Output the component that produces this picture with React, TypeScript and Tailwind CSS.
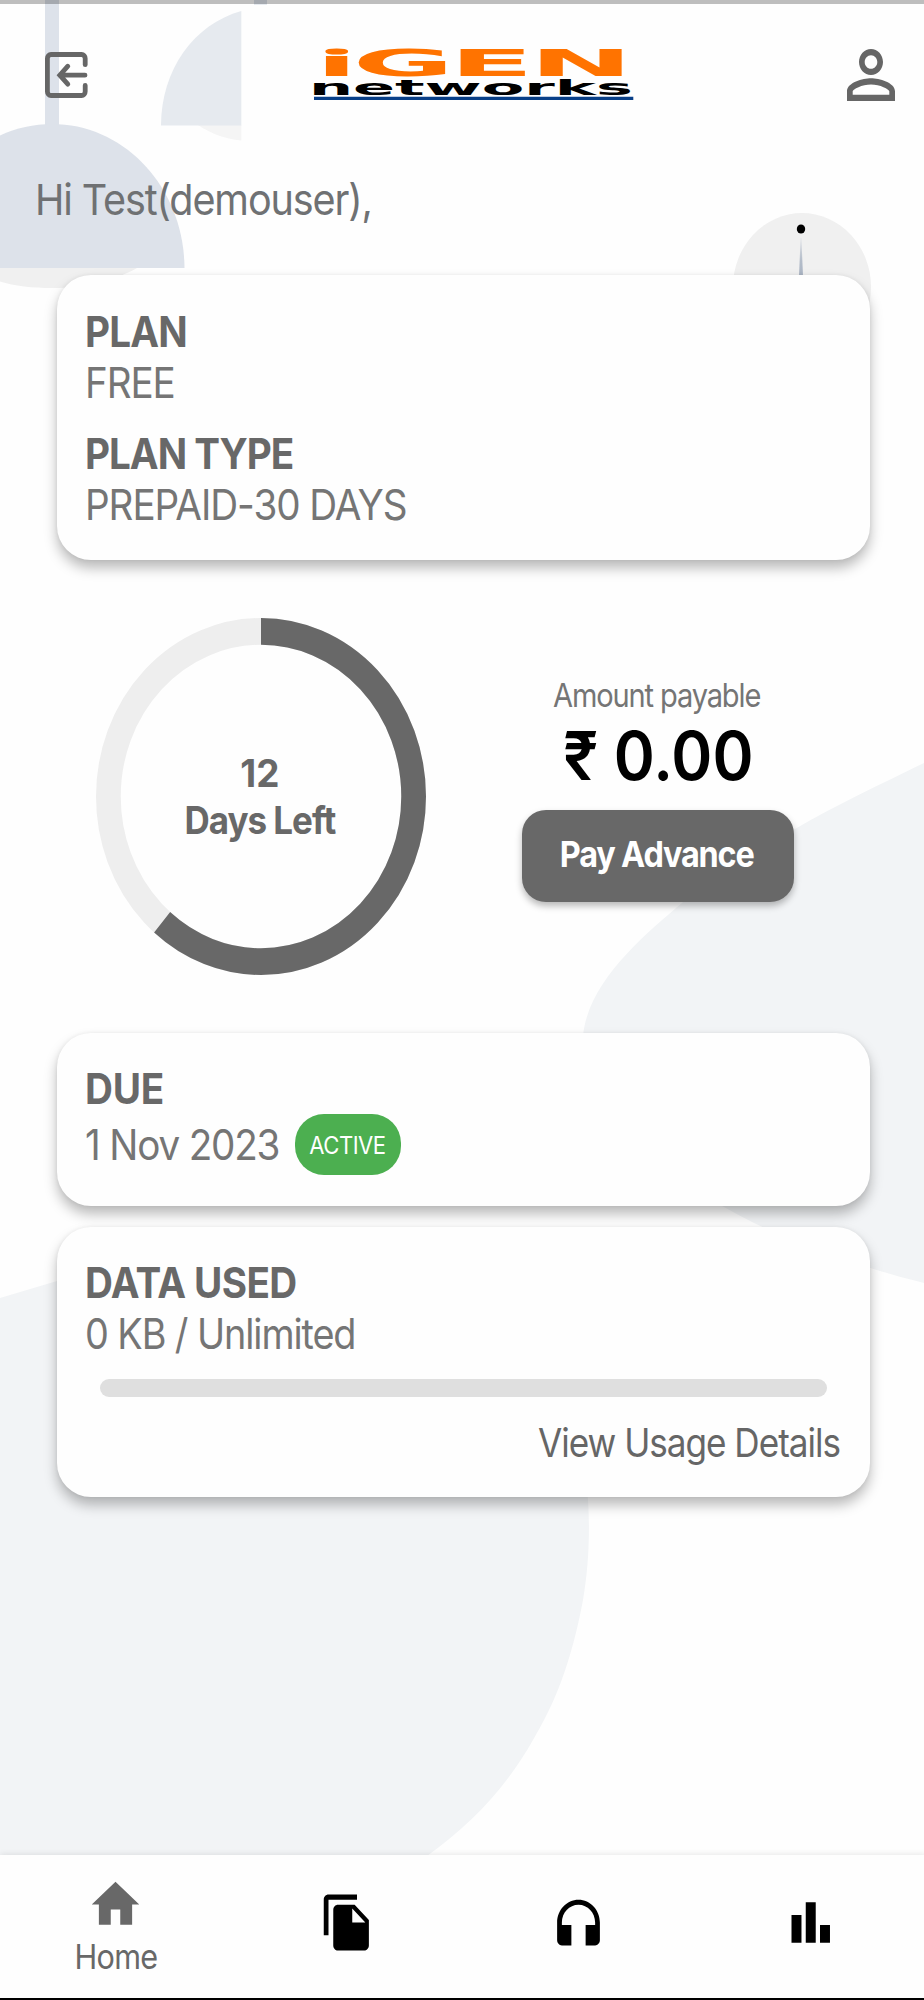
import clsx from "clsx";
import { ReactNode } from "react";

interface TextProps {
  children: ReactNode;
  className?: string;
}

// The app font is slightly condensed, so every label is squeezed a little
const Text = ({ children, className }: TextProps) => (
  <span className={clsx("block whitespace-nowrap", className)}>{children}</span>
);

const Card = ({ children, className }: TextProps) => (
  <section
    className={clsx(
      "mx-[57px] w-[813px] rounded-[34px] bg-[#fefefe] pl-7 pr-[30px] shadow-[0_8px_13px_rgba(0,0,0,0.27),0_0_4px_rgba(0,0,0,0.06)]",
      className
    )}
  >
    {children}
  </section>
);

const NavIcon = ({ path, className }: { path: string; className: string }) => (
  <svg
    viewBox="0 0 24 24"
    preserveAspectRatio="none"
    fill="currentColor"
    className={clsx("h-[61px] w-[57px]", className)}
  >
    <path d={path} />
  </svg>
);

const Backdrop = () => (
  <svg
    viewBox="0 0 924 2000"
    className="absolute inset-0 -z-10 h-[2000px] w-[924px]"
  >
    <defs>
      <linearGradient id="needle" x1="0" y1="0" x2="0" y2="1">
        <stop offset="0" stopColor="#e3e5e9" />
        <stop offset="0.6" stopColor="#b3bcc9" />
        <stop offset="1" stopColor="#aab4c3" />
      </linearGradient>
    </defs>
    <path fill="#dde2ea" d="M45 0h14v125H45z" />
    <path fill="#f0f0f0" d="M0 268h137C116 280 85 288 52 288 33 288 14 286 0 281.5z" />
    <path
      fill="#dde2ea"
      d="M0 135.5C16 128 34 124 52 124c73 0 132 64 132.500 144H0z"
    />
    <path fill="#f5f5f5" d="M198 125h43.300v15.500C224 139 210 133 198 125z" />
    <path fill="#e6eaef" d="M161 125.500C161 70 194 24 241.300 11v114.500z" />
    <path fill="#dde2ea" d="M254 0h13v4.700h-13z" />
    <ellipse cx="802" cy="287" rx="69" ry="74" fill="#f0f0f0" />
    <ellipse cx="801" cy="229" rx="4.200" ry="4.600" fill="#000" />
    <path fill="url(#needle)" d="M800.600 238h.8L803 276h-4z" />
    <path
      fill="#f2f4f6"
      d="M924 763C881 784 838 804 795 829 752 854 717 873 682 903 643 936 588 982 583 1036 583 1110 650 1170 724 1207 775 1236 840 1262 924 1283z"
    />
    <path
      fill="#f2f4f6"
      d="M0 1298 57 1281C200 1240 400 1230 500 1320 560 1376 586 1440 588 1500 590 1530 589 1565 583 1600 571 1664 554 1705 533 1740 507 1786 472 1824 427 1856H0z"
    />
  </svg>
);

const Logo = () => (
  <svg viewBox="0 0 326 60" className="h-[60px] w-[326px] overflow-visible">
    <text
      transform="translate(6.500 34) scale(3.100 1)"
      fontFamily="Open Sans"
      fontWeight="800"
      fontSize="36"
      fill="#ff7300"
    >
      i
    </text>
    <text
      transform="translate(40.500 34) scale(3.350 1)"
      fontFamily="DejaVu Sans"
      fontWeight="700"
      fontSize="37"
      textLength="83.700"
      fill="#ff7300"
    >
      GEN
    </text>
    <text
      transform="translate(-3 52.500) scale(2.950 1)"
      fontFamily="DejaVu Sans"
      fontWeight="700"
      fontSize="21"
      textLength="109.800"
      fill="#000"
    >
      networks
    </text>
    <path fill="#083f88" d="M2 54.800h319.300v3.200H2z" />
  </svg>
);

const Header = () => (
  <header className="flex h-[151px] items-start justify-between pl-[44px] pr-[17px]">
    <svg
      viewBox="0 0 44 48"
      className="mt-[51px] h-12 w-11"
      fill="none"
      stroke="#666"
      strokeWidth="4.800"
      strokeLinecap="round"
      strokeLinejoin="round"
    >
      <path d="M41.200 13.700V7.500a3.600 4 0 0 0-3.600-4H7a3.600 4 0 0 0-3.600 4v33a3.600 4 0 0 0 3.600 4h30.600a3.600 4 0 0 0 3.600-4V34.500" />
      <path d="M41 24.200H16M23.800 15.200 15.800 24.200l8 9" strokeLinejoin="miter" />
    </svg>
    <div className="mt-[42px] pl-[27px]">
      <Logo />
    </div>
    <svg
      viewBox="0 0 24 24"
      preserveAspectRatio="none"
      fill="#666"
      className="mt-[36px] h-[78px] w-[72px]"
    >
      <path d="M12 5.900c1.160 0 2.100.94 2.100 2.100s-.94 2.100-2.100 2.100S9.900 9.160 9.900 8s.94-2.100 2.100-2.100m0 9c2.970 0 6.100 1.460 6.100 2.100v1.100H5.900V17c0-.64 3.130-2.100 6.100-2.100M12 4C9.790 4 8 5.790 8 8s1.790 4 4 4 4-1.790 4-4-1.790-4-4-4zm0 9c-2.670 0-8 1.340-8 4v3h16v-3c0-2.660-5.330-4-8-4z" />
    </svg>
  </header>
);

const DAYS_IN_CYCLE = 31;
const DAYS_LEFT = 12;

const DaysLeft = () => {
  const used = (DAYS_IN_CYCLE - DAYS_LEFT) / DAYS_IN_CYCLE;
  return (
    <div className="relative flex h-[357px] w-[330px] flex-col items-center justify-center">
      <svg
        viewBox="0 0 100 100"
        preserveAspectRatio="none"
        fill="none"
        strokeWidth="7.500"
        className="absolute inset-0 h-full w-full"
      >
        <circle cx="50" cy="50" r="46.250" stroke="#eee" />
        <circle
          cx="50"
          cy="50"
          r="46.250"
          stroke="#686868"
          pathLength="1"
          strokeDasharray={`${used} 1`}
          transform="rotate(-90 50 50)"
        />
      </svg>
      <div className="relative pr-[3px] text-center text-[38px] leading-[47px] font-bold text-[#686868]">
        <Text className="scale-x-[0.97]">{DAYS_LEFT}</Text>
        <Text className="scale-x-[0.92] tracking-[-1.1px]">Days Left</Text>
      </div>
    </div>
  );
};

const navItems = [
  {
    name: "Documents",
    path: "M16 1H4c-1.100 0-2 .9-2 2v14h2V3h12V1zm-1 4l6 6v10c0 1.100-.9 2-2 2H7.990C6.890 23 6 22.100 6 21l.01-14c0-1.100.89-2 1.990-2h7zm-1 7h5.500L14 6.500V12z",
  },
  {
    name: "Support",
    path: "M12 3c-4.970 0-9 4.030-9 9v7c0 1.100.9 2 2 2h4v-8H5v-1c0-3.870 3.130-7 7-7s7 3.130 7 7v1h-4v8h4c1.100 0 2-.9 2-2v-7c0-4.970-4.030-9-9-9z",
  },
  {
    name: "Usage",
    path: "M4 9h4.200v11H4zM16 13h4.200v7H16zM10 4h4.200v16H10z",
  },
];

const BottomNav = () => (
  <nav className="grid h-[145px] w-[926px] grid-cols-4 justify-items-center border-b-2 border-black bg-[#fefefe] text-black shadow-[0_-1px_6px_rgba(0,0,0,0.09)]">
    <a className="flex flex-col items-center text-[#686868]">
      <NavIcon className="mt-[19px]" path="M10 20v-6h4v6h5v-8h3L12 3 2 12h3v8z" />
      <Text className="scale-x-[0.9] text-[34px] leading-[43px] tracking-[-0.8px]">
        Home
      </Text>
    </a>
    {navItems.map((item) => (
      <a key={item.name} aria-label={item.name}>
        <NavIcon className="mt-[37px]" path={item.path} />
      </a>
    ))}
  </nav>
);

export default function App() {
  return (
    <div className="relative isolate flex h-[2000px] w-[924px] flex-col overflow-hidden bg-[#fefefe] font-['Inter','Liberation_Sans',sans-serif]">
      <Backdrop />
      <div className="absolute inset-x-0 top-0 h-1 bg-black/25" />
      <Header />

      <main className="flex-1">
        <Text className="h-[124px] origin-left scale-x-[0.92] pl-[38px] text-[43px] leading-[97px] tracking-[-1.23px] text-[#6f7173]">
          Hi Test(demouser),
        </Text>

        <Card className="h-[285px] pt-[31px] text-[42px] leading-[51px] text-[#757575]">
          <Text className="origin-left scale-x-[0.92] font-bold tracking-[-0.9px] text-[#686868]">
            PLAN
          </Text>
          <Text className="origin-left scale-x-[0.92] tracking-[-1.25px]">
            FREE
          </Text>
          <Text className="mt-5 origin-left scale-x-[0.92] font-bold tracking-[-1.1px] text-[#686868]">
            PLAN TYPE
          </Text>
          <Text className="origin-left scale-x-[0.92] tracking-[-1.15px]">
            PREPAID-30 DAYS
          </Text>
        </Card>

        <div className="flex h-[473px] items-center pl-24">
          <DaysLeft />
          <div className="-mt-4 ml-24 flex w-[272px] flex-col items-center">
            <Text className="mr-0.5 scale-x-[0.88] text-[33px] leading-[40px] tracking-[-1.3px] text-[#757575]">
              Amount payable
            </Text>
            <Text className="scale-x-[0.93] text-[67px] leading-[82px] font-semibold text-black">
              ₹ 0.00
            </Text>
            <button className="mt-[13px] flex h-[92px] w-[272px] justify-center rounded-[24px] bg-[#686868] text-[36px] leading-[89px] font-bold text-white shadow-[0_4px_7px_rgba(0,0,0,0.28)]">
              <Text className="mr-[3px] scale-x-[0.9] tracking-[-1.3px]">
                Pay Advance
              </Text>
            </button>
          </div>
        </div>

        <Card className="h-[173px] pt-[30px] text-[42px] leading-[51px] text-[#757575]">
          <Text className="origin-left scale-x-[0.92] font-bold tracking-[-0.25px] text-[#686868]">
            DUE
          </Text>
          <div className="flex items-center">
            <Text className="w-[210px] origin-left scale-x-[0.92] tracking-[-1.28px]">
              1 Nov 2023
            </Text>
            <span className="flex h-[61px] w-[106px] items-center justify-center rounded-[29px] bg-[#4caf50] pt-[3px] pr-0.5 text-2xl text-white">
              <Text className="scale-x-[0.92] tracking-[-0.55px]">ACTIVE</Text>
            </span>
          </div>
        </Card>

        <Card className="mt-[21px] h-[270px] pt-[30px] text-[42px] leading-[51px] text-[#757575]">
          <Text className="origin-left scale-x-[0.92] font-bold tracking-[-0.65px] text-[#686868]">
            DATA USED
          </Text>
          <Text className="origin-left scale-x-[0.9] tracking-[-1.2px]">
            0 KB / Unlimited
          </Text>
          <div className="mt-5 ml-[15px] h-[18px] w-[727px] rounded-[9px] bg-[#dfdfdf]" />
          <Text className="mt-5 origin-right scale-x-[0.9] text-right text-[39px] tracking-[-1.12px] text-[#666]">
            View Usage Details
          </Text>
        </Card>
      </main>

      <BottomNav />
    </div>
  );
}
